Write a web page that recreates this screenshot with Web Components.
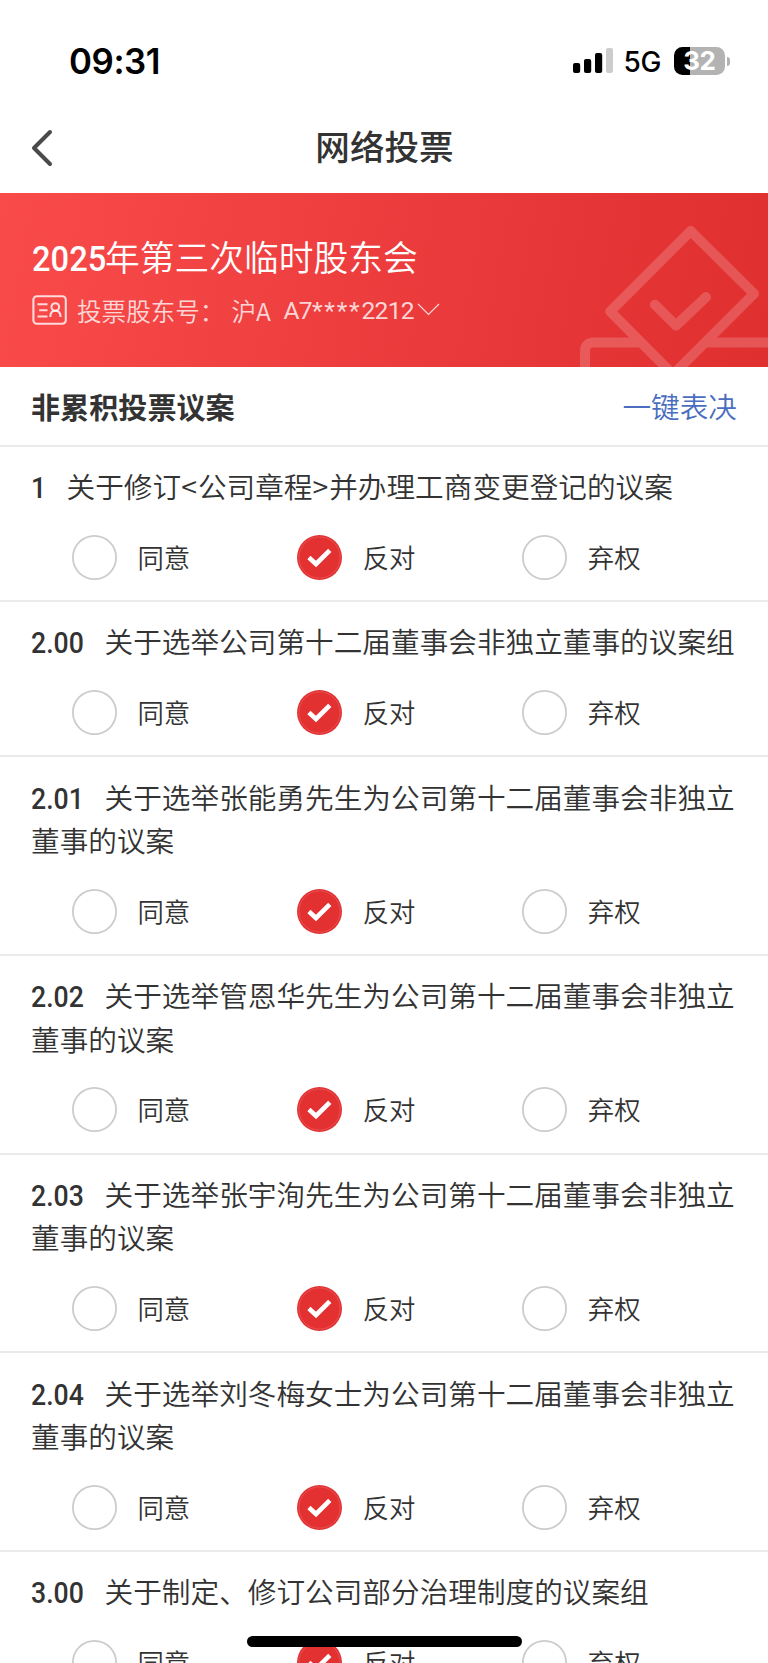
<!DOCTYPE html>
<html lang="zh-CN">
<head>
<meta charset="utf-8">
<meta name="viewport" content="width=device-width">
<title>网络投票</title>
<style>
    html, body { margin: 0; height: 1663px; overflow: hidden; background: #fff; }
    body { font-family: "Noto Sans CJK SC", sans-serif; color: #333; }
</style>
</head>
<body>
<vote-page></vote-page>

<script>
class StatusBar extends HTMLElement {
    constructor() {
        super();
        this.attachShadow({ mode: 'open' });
    }

    connectedCallback() {
        this.shadowRoot.innerHTML = `
            <style>
                :host { display: flex; justify-content: space-between; align-items: center; height: 98px; padding: 24px 38px 0 69px; box-sizing: border-box; font-family: Inter, sans-serif; color: #000; }
                .time { font-size: 34.8px; font-weight: 600; letter-spacing: -0.4px; line-height: 40px; }
                .right { display: flex; align-items: center; }
                .net { width: 60px; padding-left: 10px; font-size: 28px; font-weight: 450; line-height: 30px; letter-spacing: -0.3px; box-sizing: border-box; margin-top: 2px; }
                .battery { width: 51.5px; height: 28px; border-radius: 8.5px; background: linear-gradient(90deg, #000 16px, #b3b3b3 16px); color: #fff; font-size: 26px; font-weight: 700; line-height: 28px; text-align: center; letter-spacing: -0.6px; }
                .nub { margin-left: 2px; width: 3px; height: 9px; border-radius: 0 4px 4px 0; background: #b3b3b3; }
            </style>
            <span class="time">09:31</span>
            <div class="right">
                <svg width="41" height="26" viewBox="0 0 41 26">
                    <rect x="0" y="15" width="7.2" height="10" rx="2"/>
                    <rect x="11" y="11" width="7.2" height="14" rx="2"/>
                    <rect x="22" y="5" width="7.2" height="20" rx="2"/>
                    <rect x="33" y="0" width="7" height="25" rx="2" fill="#ccc"/>
                </svg>
                <span class="net">5G</span>
                <div class="battery">32</div>
                <div class="nub"></div>
            </div>`;
    }
}
customElements.define('status-bar', StatusBar);

class NavBar extends HTMLElement {
    constructor() {
        super();
        this.attachShadow({ mode: 'open' });
    }

    connectedCallback() {
        this.shadowRoot.innerHTML = `
            <style>
                :host { display: grid; grid-template-columns: 100px 1fr 100px; align-items: center; height: 94.5px; }
                svg { margin: 5px 0 0 30px; }
                h1 { margin: 0 0 0 1px; font-size: 34.6px; font-weight: 500; line-height: 50px; text-align: center; }
            </style>
            <svg width="24" height="40" viewBox="0 0 24 40" fill="none" stroke="#4a4a4a" stroke-width="4" stroke-linecap="round" stroke-linejoin="round"><path d="M20 4 L4 20 L20 36"/></svg>
            <h1><slot></slot></h1>`;
    }
}
customElements.define('nav-bar', NavBar);

class MeetingBanner extends HTMLElement {
    constructor() {
        super();
        this.attachShadow({ mode: 'open' });
    }

    connectedCallback() {
        this.shadowRoot.innerHTML = `
            <style>
                :host { display: block; position: relative; height: 174px; padding: 38px 0 0 31.5px; box-sizing: border-box; overflow: hidden; color: #fff; background: linear-gradient(100deg, #fa4b4b 0%, #e63637 72%, #e02f2f 100%); }
                .title { display: flex; align-items: baseline; font-size: 34.75px; font-weight: 350; line-height: 50px; }
                .year { width: 73.6px; font-family: Roboto, sans-serif; font-weight: 500; }
                .year span { display: inline-block; transform: scaleX(.94); transform-origin: 0 50%; }
                .account { display: flex; align-items: center; height: 36px; margin-top: 8px; font-size: 24.57px; font-weight: 350; line-height: 36px; color: rgba(255,255,255,.8); }
                .account > span { white-space: pre; }
                .label { width: 154.5px; margin-left: 10.5px; }
                .market { width: 52px; }
                .account .code { width: 133px; padding-top: 3px; font-family: Roboto, sans-serif; font-weight: 400; letter-spacing: -.7px; }
                .stars { letter-spacing: 1.8px; }
                .mark { position: absolute; right: 0; top: 0; opacity: .18; }
            </style>
            <svg class="mark" width="200" height="174" viewBox="568 192.5 200 174" fill="none" stroke="#fff" stroke-width="10" stroke-linecap="round" stroke-linejoin="round">
                <path d="M690.7 230.5 L754 293.3 L673 374 L610.3 311 Z"/>
                <path d="M655 304.3 L676 325 L706 296.6"/>
                <path stroke-linecap="butt" d="M585 368 V351 Q585 342 594 342 H641 M704 342 H770"/>
            </svg>
            <div class="title"><span class="year"><span>2025</span></span><span><slot name="title"></slot></span></div>
            <div class="account">
                <svg width="35" height="30" viewBox="0 0 35 30" fill="none" stroke="#fff" stroke-opacity=".8" stroke-width="2.1">
                    <rect x="1.4" y="1.2" width="32.4" height="27.6" rx="3.5"/>
                    <path d="M5.5 9.2 H15.5 M7.2 15.3 H15.5 M5.5 21.5 H15.5 M18.3 22 C18.3 18 20 15.8 23.3 15.8 C26.6 15.8 28.5 18 28.5 22"/>
                    <circle cx="23.3" cy="12" r="3.8"/>
                </svg>
                <span class="label">投票股东号：</span>
                <span class="market">沪A</span>
                <span class="code">A7<span class="stars">****</span>2212</span>
                <svg width="23" height="13" viewBox="0 0 23 13" fill="none" stroke="#fff" stroke-opacity=".8" stroke-width="1.2"><path d="M1 1 L11.5 11.5 L22 1"/></svg>
            </div>`;
    }
}
customElements.define('meeting-banner', MeetingBanner);

class SectionHeader extends HTMLElement {
    constructor() {
        super();
        this.attachShadow({ mode: 'open' });
    }

    connectedCallback() {
        this.shadowRoot.innerHTML = `
            <style>
                :host { display: flex; justify-content: space-between; align-items: center; height: 80.1px; padding: 0 31px 0 31px; box-sizing: border-box; border-bottom: 2px solid #ebebeb; }
                h2 { margin: 0; font-size: 29.1px; font-weight: 700; line-height: 44px; }
                .action { font-size: 28.65px; font-weight: 350; line-height: 44px; color: #4a6dc0; }
            </style>
            <h2><slot></slot></h2>
            <span class="action"><slot name="action"></slot></span>`;
    }
}
customElements.define('section-header', SectionHeader);

class VoteOption extends HTMLElement {
    constructor() {
        super();
        this.attachShadow({ mode: 'open' });
    }

    connectedCallback() {
        const checked = this.hasAttribute('checked');
        this.shadowRoot.innerHTML = `
            <style>
                :host { display: flex; align-items: center; gap: 20.7px; height: 45px; font-size: 26.4px; font-weight: 350; line-height: 38px; }
                svg { flex: none; }
                span { margin-top: -1px; }
            </style>
            <svg width="45" height="45" viewBox="0 0 45 45" fill="none">
                ${checked ? `
                <circle cx="22.5" cy="22.5" r="22.5" fill="#e33132"/>
                <circle cx="22.5" cy="22.5" r="20.6" stroke="#ea6263" stroke-width=".6"/>
                <path d="M11.9 22.5 L19 29 L32.8 15.3" stroke="#fff" stroke-width="4.6"/>` : `
                <circle cx="22.5" cy="22.5" r="21.6" stroke="#ccc" stroke-width="1.8"/>`}
            </svg>
            <span><slot></slot></span>`;
    }
}
customElements.define('vote-option', VoteOption);

class VoteItem extends HTMLElement {
    constructor() {
        super();
        this.attachShadow({ mode: 'open' });
    }

    connectedCallback() {
        const no = this.getAttribute('no');
        this.shadowRoot.innerHTML = `
            <style>
                :host { display: block; padding: 17.5px 0 20.2px; border-bottom: 2px solid #ebebeb; }
                .title { margin: 0 30.5px 27.5px 31px; font-size: 28.65px; font-weight: 350; line-height: 43.2px; }
                .no { display: inline-block; width: ${no.length > 1 ? 73.6 : 35.6}px; font-family: Roboto, sans-serif; font-weight: 500; line-height: 30px; }
                .no span { display: inline-block; transform: scaleX(.93); transform-origin: 0 50%; }
                .options { display: grid; grid-template-columns: repeat(3, 225.2px); padding-left: 71.8px; }
                ::slotted(i) { font-style: normal; letter-spacing: 1px; }
            </style>
            <div class="title"><span class="no"><span>${no}</span></span><slot></slot></div>
            <div class="options">
                <vote-option>同意</vote-option>
                <vote-option checked>反对</vote-option>
                <vote-option>弃权</vote-option>
            </div>`;
    }
}
customElements.define('vote-item', VoteItem);

class VotePage extends HTMLElement {
    constructor() {
        super();
        this.attachShadow({ mode: 'open' });
    }

    connectedCallback() {
        const items = [
            ['1', '关于修订<i>&lt;</i>公司章程<i>&gt;</i>并办理工商变更登记的议案'],
            ['2.00', '关于选举公司第十二届董事会非独立董事的议案组'],
            ['2.01', '关于选举张能勇先生为公司第十二届董事会非独立董事的议案'],
            ['2.02', '关于选举管恩华先生为公司第十二届董事会非独立董事的议案'],
            ['2.03', '关于选举张宇洵先生为公司第十二届董事会非独立董事的议案'],
            ['2.04', '关于选举刘冬梅女士为公司第十二届董事会非独立董事的议案'],
            ['3.00', '关于制定、修订公司部分治理制度的议案组'],
        ];

        this.shadowRoot.innerHTML = `
            <style>
                :host { display: block; position: relative; width: 768px; height: 1663px; overflow: hidden; }
                .home { position: absolute; left: 247px; bottom: 16.5px; width: 274.5px; height: 10.5px; border-radius: 6px; background: #000; }
            </style>
            <status-bar></status-bar>
            <nav-bar>网络投票</nav-bar>
            <meeting-banner><span slot="title">年第三次临时股东会</span></meeting-banner>
            <section-header>非累积投票议案<span slot="action">一键表决</span></section-header>
            ${items.map(([no, title]) => `<vote-item no="${no}">${title}</vote-item>`).join('')}
            <div class="home"></div>`;
    }
}
customElements.define('vote-page', VotePage);
</script>
</body>
</html>
